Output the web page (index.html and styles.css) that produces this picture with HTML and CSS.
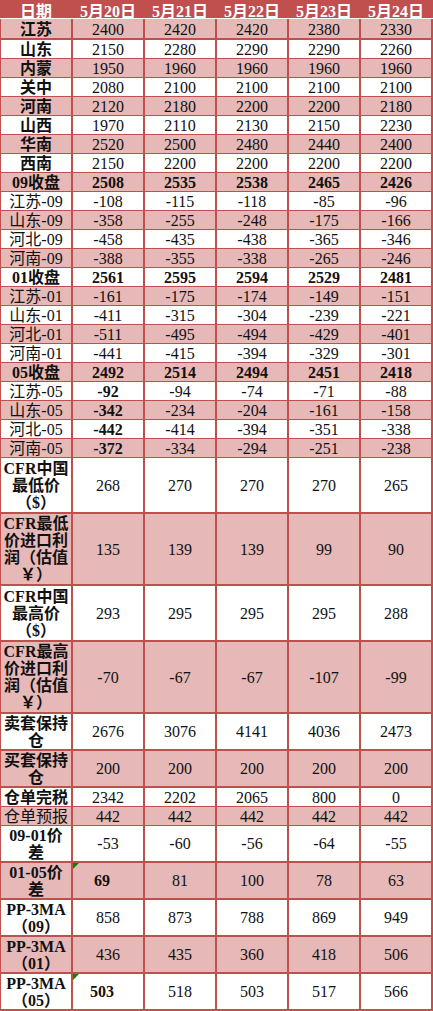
FILE: index.html
```html
<!DOCTYPE html>
<html lang="zh-CN">
<head>
<meta charset="utf-8">
<title>PP 价格表</title>
<link rel="stylesheet" href="styles.css">
</head>
<body>
<div class="sheet">
  <div class="head">
    <div>日期</div><div>5月20日</div><div>5月21日</div><div>5月22日</div><div>5月23日</div><div>5月24日</div>
  </div>
  <div class="body">
    <div class="row pink first"><div class="b">江苏</div><div>2400</div><div>2420</div><div>2420</div><div>2380</div><div>2330</div></div>
    <div class="row"><div class="b">山东</div><div>2150</div><div>2280</div><div>2290</div><div>2290</div><div>2260</div></div>
    <div class="row pink"><div class="b">内蒙</div><div>1950</div><div>1960</div><div>1960</div><div>1960</div><div>1960</div></div>
    <div class="row"><div class="b">关中</div><div>2080</div><div>2100</div><div>2100</div><div>2100</div><div>2100</div></div>
    <div class="row pink"><div class="b">河南</div><div>2120</div><div>2180</div><div>2200</div><div>2200</div><div>2180</div></div>
    <div class="row"><div class="b">山西</div><div>1970</div><div>2110</div><div>2130</div><div>2150</div><div>2230</div></div>
    <div class="row pink"><div class="b">华南</div><div>2520</div><div>2500</div><div>2480</div><div>2440</div><div>2400</div></div>
    <div class="row"><div class="b">西南</div><div>2150</div><div>2200</div><div>2200</div><div>2200</div><div>2200</div></div>
    <div class="row pink bold"><div>09收盘</div><div>2508</div><div>2535</div><div>2538</div><div>2465</div><div>2426</div></div>
    <div class="row"><div>江苏-09</div><div>-108</div><div>-115</div><div>-118</div><div>-85</div><div>-96</div></div>
    <div class="row pink"><div>山东-09</div><div>-358</div><div>-255</div><div>-248</div><div>-175</div><div>-166</div></div>
    <div class="row"><div>河北-09</div><div>-458</div><div>-435</div><div>-438</div><div>-365</div><div>-346</div></div>
    <div class="row pink"><div>河南-09</div><div>-388</div><div>-355</div><div>-338</div><div>-265</div><div>-246</div></div>
    <div class="row bold"><div>01收盘</div><div>2561</div><div>2595</div><div>2594</div><div>2529</div><div>2481</div></div>
    <div class="row pink"><div>江苏-01</div><div>-161</div><div>-175</div><div>-174</div><div>-149</div><div>-151</div></div>
    <div class="row"><div>山东-01</div><div>-411</div><div>-315</div><div>-304</div><div>-239</div><div>-221</div></div>
    <div class="row pink"><div>河北-01</div><div>-511</div><div>-495</div><div>-494</div><div>-429</div><div>-401</div></div>
    <div class="row"><div>河南-01</div><div>-441</div><div>-415</div><div>-394</div><div>-329</div><div>-301</div></div>
    <div class="row pink bold"><div>05收盘</div><div>2492</div><div>2514</div><div>2494</div><div>2451</div><div>2418</div></div>
    <div class="row"><div>江苏-05</div><div class="b">-92</div><div>-94</div><div>-74</div><div>-71</div><div>-88</div></div>
    <div class="row pink"><div>山东-05</div><div class="b">-342</div><div>-234</div><div>-204</div><div>-161</div><div>-158</div></div>
    <div class="row"><div>河北-05</div><div class="b">-442</div><div>-414</div><div>-394</div><div>-351</div><div>-338</div></div>
    <div class="row pink"><div>河南-05</div><div class="b">-372</div><div>-334</div><div>-294</div><div>-251</div><div>-238</div></div>
    <div class="row h3"><div class="b">CFR中国<br>最低价<br>（$）</div><div>268</div><div>270</div><div>270</div><div>270</div><div>265</div></div>
    <div class="row pink h4"><div class="b">CFR最低<br>价进口利<br>润（估值<br>￥）</div><div>135</div><div>139</div><div>139</div><div>99</div><div>90</div></div>
    <div class="row h3"><div class="b">CFR中国<br>最高价<br>（$）</div><div>293</div><div>295</div><div>295</div><div>295</div><div>288</div></div>
    <div class="row pink h4"><div class="b">CFR最高<br>价进口利<br>润（估值<br>￥）</div><div>-70</div><div>-67</div><div>-67</div><div>-107</div><div>-99</div></div>
    <div class="row h2"><div class="b">卖套保持<br>仓</div><div>2676</div><div>3076</div><div>4141</div><div>4036</div><div>2473</div></div>
    <div class="row pink h2"><div class="b">买套保持<br>仓</div><div>200</div><div>200</div><div>200</div><div>200</div><div>200</div></div>
    <div class="row"><div class="b">仓单完税</div><div>2342</div><div>2202</div><div>2065</div><div>800</div><div>0</div></div>
    <div class="row pink"><div>仓单预报</div><div>442</div><div>442</div><div>442</div><div>442</div><div>442</div></div>
    <div class="row h2"><div class="b">09-01价<br>差</div><div>-53</div><div>-60</div><div>-56</div><div>-64</div><div>-55</div></div>
    <div class="row pink h2"><div class="b">01-05价<br>差</div><div class="b flag">69</div><div>81</div><div>100</div><div>78</div><div>63</div></div>
    <div class="row h2"><div class="b">PP-3MA<br>（09）</div><div>858</div><div>873</div><div>788</div><div>869</div><div>949</div></div>
    <div class="row pink h2"><div class="b">PP-3MA<br>（01）</div><div>436</div><div>435</div><div>360</div><div>418</div><div>506</div></div>
    <div class="row h2"><div class="b">PP-3MA<br>（05）</div><div class="b flag">503</div><div>518</div><div>503</div><div>517</div><div>566</div></div>
  </div>
</div>
</body>
</html>
```

FILE: styles.css
```css
html, body {
  margin: 0;
  padding: 0;
  background: #ffffff;
}

.sheet {
  width: 433px;
  font-family: "Liberation Serif", "Noto Sans CJK SC", serif;
  font-size: 16px;
  color: #111111;
}

.head {
  display: grid;
  grid-template-columns: repeat(6, 70px);
  grid-template-rows: 1fr;
  column-gap: 2px;
  padding: 0 2px 0 1px;
  height: 18px;
  background: #c0504d;
  border-bottom: 1px solid #ffffff;
  color: #ffffff;
  font-weight: bold;
}

.head > div {
  display: flex;
  align-items: center;
  justify-content: center;
  line-height: 17px;
  padding-top: 3px;
  white-space: nowrap;
}

.body {
  display: flex;
  flex-direction: column;
  gap: 2px;
  padding: 0 2px 2px 1px;
  background: #c0504d;
}

.row {
  display: grid;
  grid-template-columns: repeat(6, 70px);
  grid-template-rows: 1fr;
  column-gap: 2px;
  height: 17px;
}

.row > div {
  display: flex;
  align-items: center;
  justify-content: center;
  text-align: center;
  line-height: 17px;
  white-space: nowrap;
  background: #ffffff;
  padding-top: 1px;
  box-sizing: border-box;
}

.row.pink > div {
  background: #e6b8b7;
}

.row.first {
  height: 19px;
}

.row.h2 {
  height: 35px;
}

.row.h3 {
  height: 54px;
}

.row.h4 {
  height: 70px;
}

.row.h2 > div,
.row.h3 > div,
.row.h4 > div {
  padding-top: 0;
}

.b,
.bold > div {
  font-weight: bold;
}

.flag {
  position: relative;
  padding-right: 12px;
}

.flag::before {
  content: "";
  position: absolute;
  top: 0;
  left: 0;
  width: 0;
  height: 0;
  border-style: solid;
  border-width: 6px 6px 0 0;
  border-color: #008a00 transparent transparent transparent;
}
```
